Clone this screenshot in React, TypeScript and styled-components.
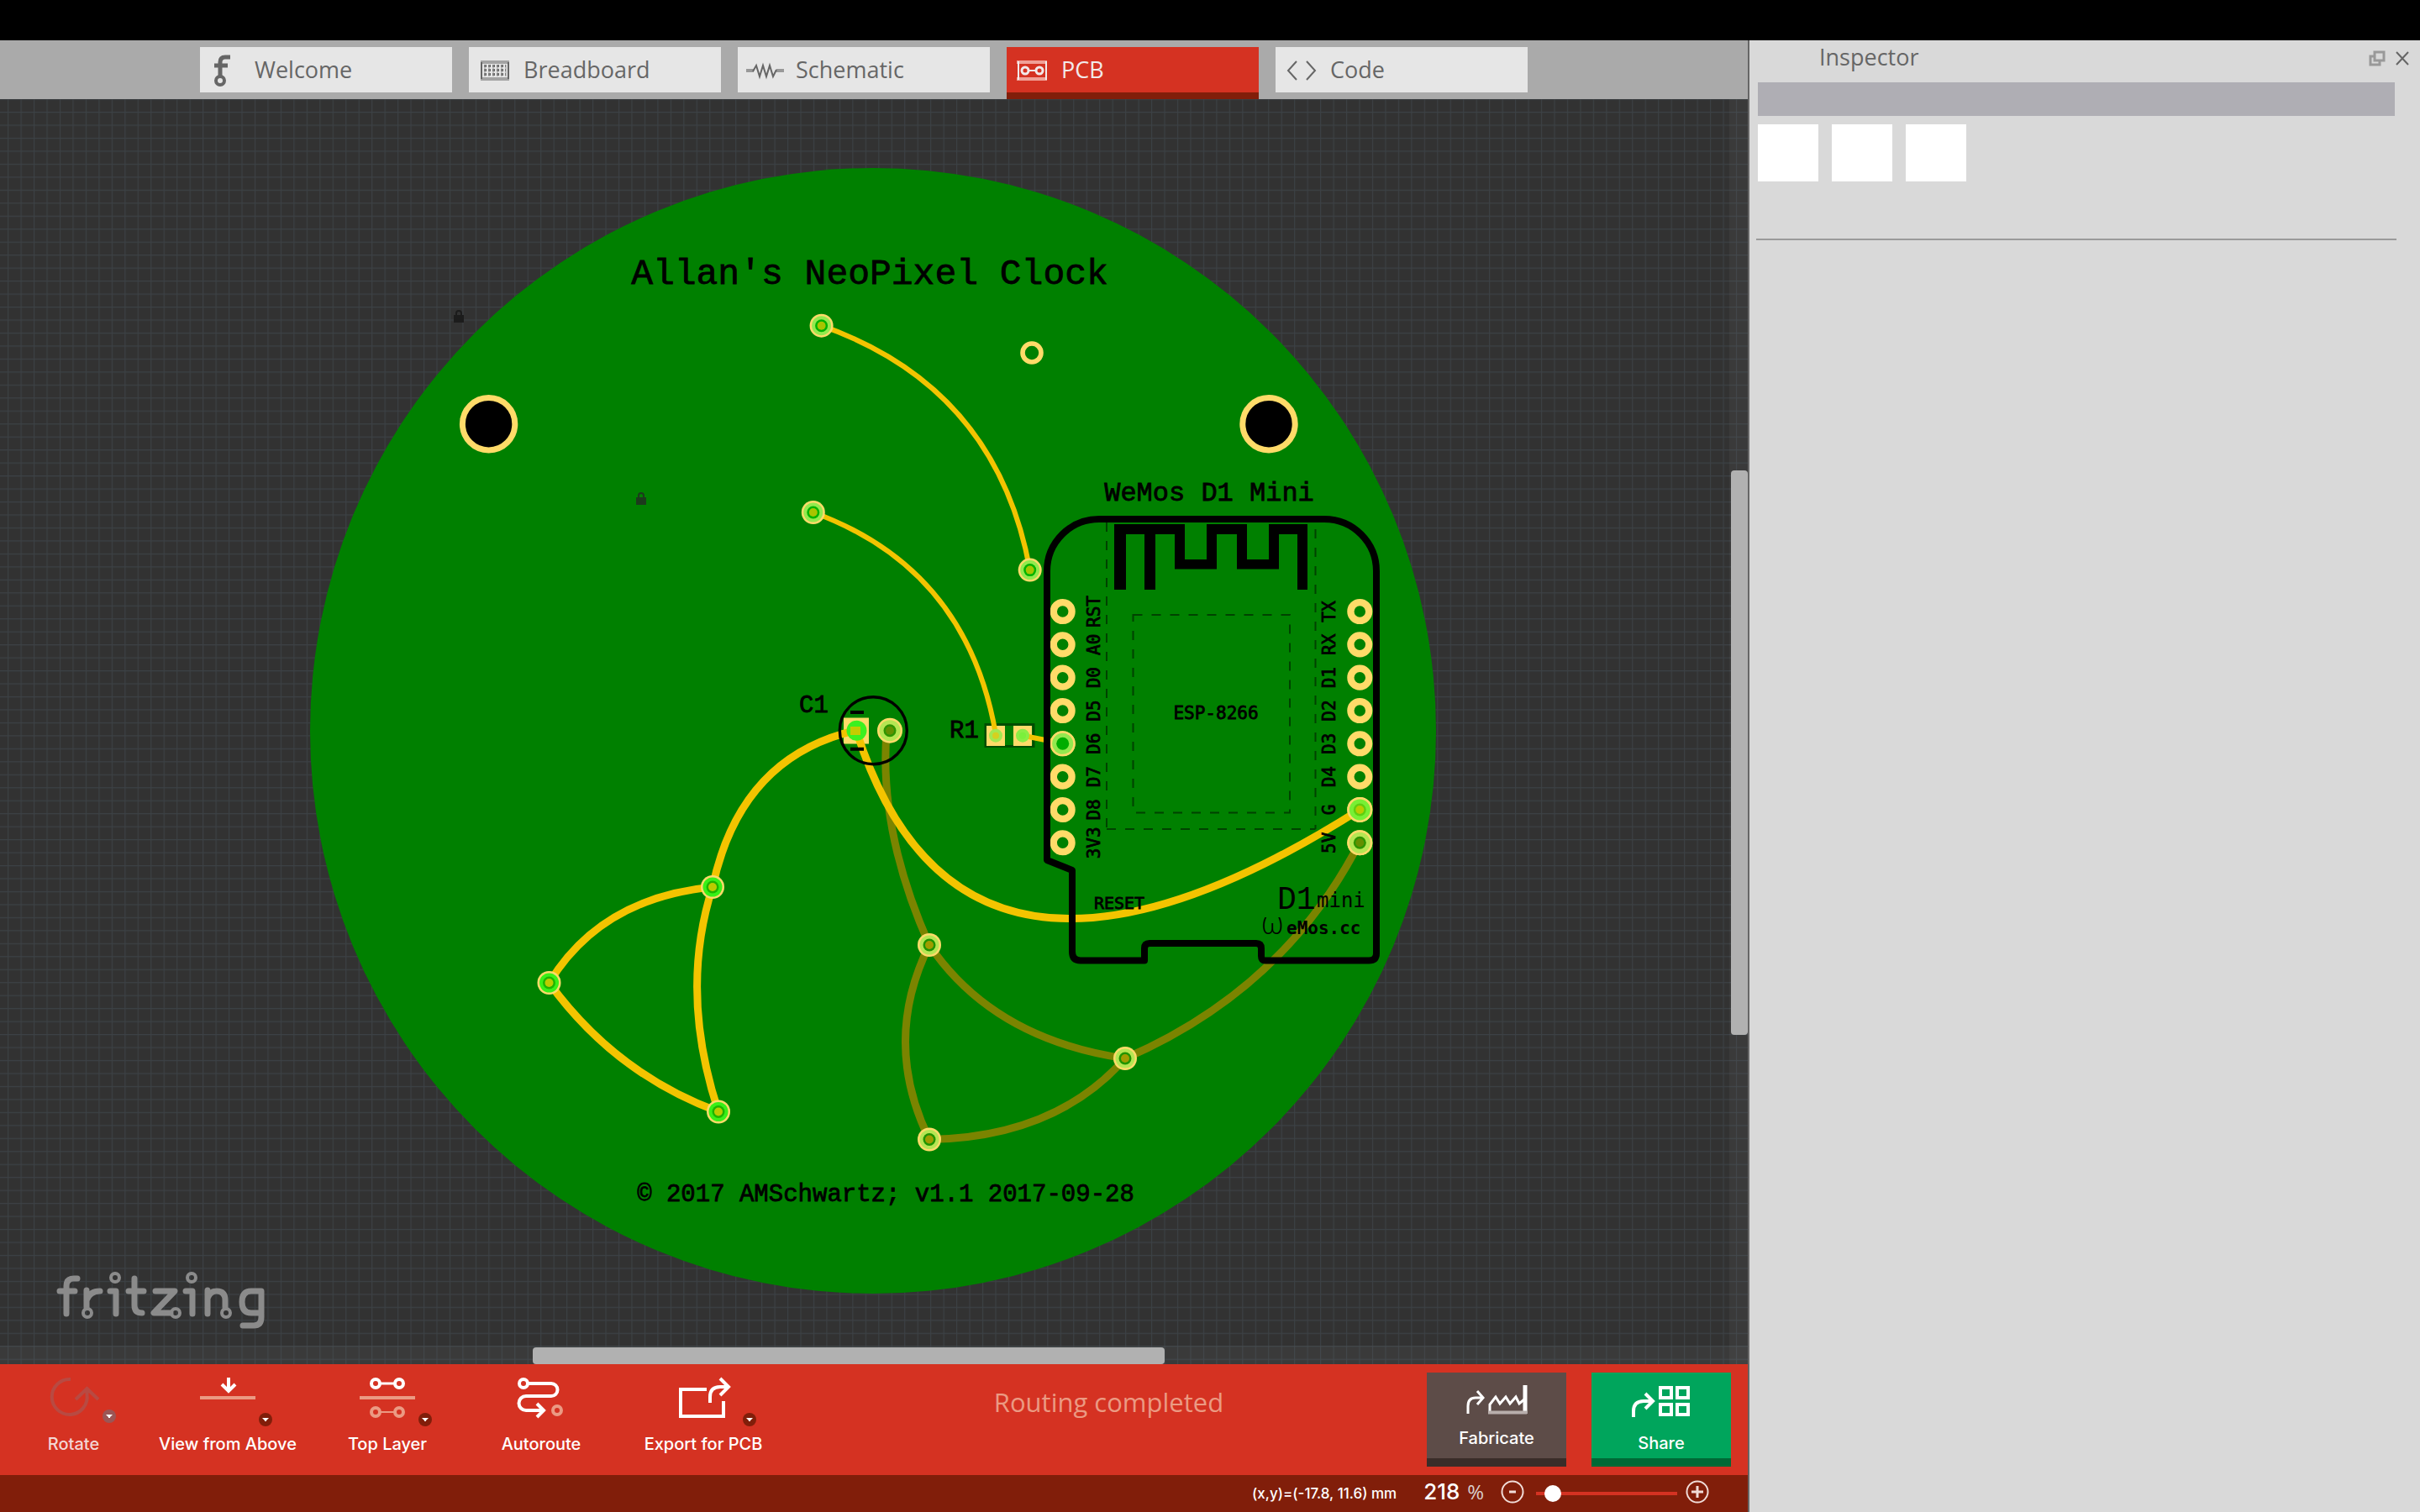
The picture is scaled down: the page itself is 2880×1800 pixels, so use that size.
import React from "react";
import styled, { createGlobalStyle, css } from "styled-components";

const uiFont = '"Open Sans", "Noto Sans", sans-serif';
const labelFont = 'Inter, Roboto, sans-serif';
const silkFont = '"Liberation Mono", monospace';
const pinFont = '"DejaVu Sans Mono", monospace';

const color = {
  red: "#d53222",
  darkRed: "#811e0a",
  blush: "#eb9a83",
  board: "#008000",
  copper: "#ffdb69",
  trace: "#f3c400",
  traceBelow: "#7b8400",
};

const GlobalStyle = createGlobalStyle`
  *, *::before, *::after { box-sizing: border-box; }
  body { margin: 0; background: #000; }
  button, input { font: inherit; color: inherit; }
`;

const Page = styled.div`
  display: flex;
  flex-direction: column;
  height: 100vh;
  font-family: ${uiFont};
`;

const MenuStrip = styled.div`
  flex: none;
  height: 48px;
  background: #000;
`;

const Workspace = styled.div`
  flex: 1;
  min-height: 0;
  display: flex;
`;

const Main = styled.main`
  flex: 1;
  min-width: 0;
  display: flex;
  flex-direction: column;
`;

const TabBar = styled.nav`
  flex: none;
  display: flex;
  gap: 20px;
  height: 70px;
  padding: 8px 20px 0 238px;
  background: #aaaaaa;
`;

const TabButton = styled.button<{ $active?: boolean }>`
  display: flex;
  align-items: flex-start;
  width: 300px;
  height: 54px;
  padding: 0;
  border: 0;
  background: #e6e6e6;
  color: #666666;
  font-size: 27px;
  font-weight: 450;
  line-height: 54px;
  text-align: left;
  ${(p) =>
    p.$active &&
    css`
      height: 62px;
      background: ${color.red};
      border-bottom: 8px solid ${color.darkRed};
      color: #f2e9ea;
    `}
`;

const TabIcon = styled.svg`
  flex: none;
  height: 54px;
  fill: none;
  stroke: currentColor;
`;

const Canvas = styled.section`
  position: relative;
  flex: 1;
  min-height: 0;
  overflow: hidden;
  background: #323232;
`;

const BoardDrawing = styled.svg`
  position: absolute;
  inset: 0;
  width: 100%;
  height: 100%;
`;

const Logo = styled.svg`
  position: absolute;
  left: 60px;
  bottom: 34px;
  width: 270px;
  height: 80px;
  fill: none;
  stroke: #8b8b8b;
  stroke-width: 7;
  stroke-linecap: round;
  stroke-linejoin: round;
`;

const Gutter = styled.div<{ $vertical?: boolean }>`
  position: absolute;
  right: 0;
  bottom: 0;
  display: flex;
  background: rgba(255, 255, 255, 0.04);
  ${(p) =>
    p.$vertical
      ? css`
          top: 0;
          width: 22px;
          flex-direction: column;
          padding-left: 2px;
        `
      : css`
          left: 0;
          height: 22px;
          padding-top: 2px;
        `}
`;

const Span = styled.div<{ $grow: number; $thumb?: boolean }>`
  flex: ${(p) => p.$grow} 1 0;
  border-radius: 4px;
  background: ${(p) => (p.$thumb ? "#b1b1b1" : "transparent")};
`;

const Toolbar = styled.div`
  flex: none;
  display: flex;
  align-items: flex-start;
  height: 132px;
  padding-right: 20px;
  background: ${color.red};
  color: #fff;
`;

const Tool = styled.button<{ $width: number; $muted?: boolean }>`
  flex: none;
  display: flex;
  flex-direction: column;
  align-items: center;
  gap: 7px;
  width: ${(p) => p.$width}px;
  padding: 12px 0 0;
  border: 0;
  background: none;
  color: ${(p) => (p.$muted ? "#f3d6d4" : "#fff")};
  font: 500 20px/24px ${labelFont};
  white-space: nowrap;
`;

const ToolIcon = styled.svg`
  width: 128px;
  height: 64px;
  fill: none;
  stroke: #fff;
  stroke-width: 4;
`;

const Message = styled.p`
  flex: 1;
  margin: 0;
  padding-top: 22px;
  color: ${color.blush};
  font-size: 31px;
  font-weight: 450;
  line-height: 46px;
  text-align: center;
`;

const Actions = styled.div`
  display: flex;
  gap: 30px;
  padding-top: 10px;
`;

const ActionButton = styled.button<{ $bg: string; $edge: string; $drop?: boolean }>`
  display: flex;
  flex-direction: column;
  align-items: center;
  gap: ${(p) => (p.$drop ? 6 : 0)}px;
  width: 166px;
  height: 112px;
  padding: 8px 0 0;
  border: 0;
  border-bottom: 10px solid ${(p) => p.$edge};
  background: ${(p) => p.$bg};
  color: #fff;
  font: 500 20px/24px ${labelFont};
`;

const ActionIcon = styled.svg`
  flex: none;
  width: 100px;
  height: 58px;
  fill: none;
  stroke: #fff;
  stroke-width: 4;
`;

const StatusBar = styled.footer`
  flex: none;
  display: flex;
  align-items: center;
  justify-content: flex-end;
  height: 44px;
  padding: 0 46px 4px 0;
  background: ${color.darkRed};
  color: #fff;
`;

const Coordinates = styled.output`
  margin-right: 32px;
  padding-top: 3px;
  font: 500 17px/24px ${labelFont};
`;

const ZoomField = styled.label`
  display: flex;
  align-items: center;
  margin-right: 20px;
  color: #d8cdcb;
  font-size: 24px;
  font-weight: 450;
  line-height: 32px;
`;

const ZoomInput = styled.input`
  width: 52px;
  padding: 0;
  border: 0;
  background: none;
  color: #fff;
  font: 500 26px/32px ${labelFont};
`;

const RoundButton = styled.button`
  display: flex;
  padding: 0;
  border: 0;
  background: none;

  svg {
    width: 28px;
    height: 28px;
    fill: none;
    stroke: #f0dcd8;
    stroke-width: 2;
  }
`;

const ZoomSlider = styled.input`
  appearance: none;
  width: 168px;
  height: 20px;
  margin: 4px 10px 0 14px;
  background: linear-gradient(${color.red}, ${color.red}) center / 100% 4px no-repeat;

  &::-webkit-slider-thumb {
    appearance: none;
    width: 20px;
    height: 20px;
    border-radius: 50%;
    background: #fff;
  }
`;

const Inspector = styled.aside`
  flex: none;
  width: 800px;
  border-left: 2px solid #666666;
  background: #d9d9d9;
  color: #666666;
`;

const InspectorHeader = styled.header`
  display: flex;
  align-items: center;
  height: 50px;
  padding: 0 10px 10px 83px;
`;

const InspectorTitle = styled.h2`
  flex: 1;
  margin: 0;
  font-size: 27px;
  font-weight: 450;
  line-height: 40px;
`;

const PanelButton = styled.button`
  display: flex;
  padding: 4px 0 0;
  margin-left: 8px;
  border: 0;
  background: none;

  svg {
    width: 22px;
    height: 22px;
    fill: none;
    stroke: currentColor;
    stroke-width: 2;
  }
`;

const InspectorBody = styled.div`
  margin: 0 28px 0 8px;
  height: 188px;
  border-bottom: 2px solid #9a9a9a;
`;

const NameBar = styled.div`
  height: 40px;
  margin: 0 2px 10px;
  background: #afaeb4;
`;

const Previews = styled.div`
  display: flex;
  gap: 16px;
  padding-left: 2px;
`;

const Preview = styled.div`
  width: 72px;
  height: 68px;
  background: #fff;
`;

const SilkText = styled.text<{ $size: number; $pin?: boolean; $bold?: boolean; $thin?: boolean }>`
  font-family: ${(p) => (p.$pin ? pinFont : silkFont)};
  font-size: ${(p) => p.$size}px;
  font-weight: ${(p) => (p.$bold ? 700 : 400)};
  fill: #000;
  stroke: #000;
  stroke-width: ${(p) => (p.$thin || p.$bold ? 0 : 0.8)};
  white-space: pre;
`;

const Mark = styled.text`
  font-family: ${uiFont};
  font-size: 36px;
  font-weight: 300;
  fill: #000;
`;

type Point = [number, number];

const leftPins = ["RST", "A0", "D0", "D5", "D6", "D7", "D8", "3V3"];
const rightPins = ["TX", "RX", "D1", "D2", "D3", "D4", "G", "5V"];
const pinY = (i: number) => 728 + i * 39.33;

const thinTraces = [
  "M977.6 387.7Q1186 461 1225.7 678.6",
  "M967.8 610Q1151 677 1185 874",
  "M1224 877L1264 885",
];
const wideTraces = [
  "M1019 869.5Q881 901 848 1056",
  "M848 1056Q715 1069 653.5 1170",
  "M653.5 1170Q732 1278 855 1323.5",
  "M848 1056Q808 1181 855 1323.5",
  "M1019 869.5Q1144 1264 1618 964",
];
const lowerTraces = [
  "M1055 873Q1046 990 1106 1125",
  "M1106 1125Q1182 1237 1339 1260",
  "M1339 1260Q1528 1178 1618 1003",
  "M1106 1125Q1049 1240 1106 1356.5",
  "M1106 1356.5Q1256 1354 1339 1260",
];

const thinVias: Point[] = [[977.6, 387.7], [967.8, 610], [1225.7, 678.6]];
const wideVias: Point[] = [[848, 1056], [653.5, 1170], [855, 1323.5]];
const lowerVias: Point[] = [[1106, 1125], [1339, 1260], [1106, 1356.5]];

function Via({ at, r = 14, glow, hole, core }: { at: Point; r?: number; glow: string; hole: string; core?: string }) {
  const [x, y] = at;
  return (
    <g>
      <circle cx={x} cy={y} r={r} fill={color.copper} />
      <circle cx={x} cy={y} r={r - 2.5} fill={glow} />
      <circle cx={x} cy={y} r={7.5} fill={hole} />
      {core && <circle cx={x} cy={y} r={5} fill={core} />}
    </g>
  );
}

function Lock({ x, y, fill }: { x: number; y: number; fill: string }) {
  return (
    <g>
      <path d={`M${x + 3} ${y + 6}V${y + 4}a3 3 0 0 1 6 0v2`} fill="none" stroke={fill} strokeWidth="2" />
      <rect x={x} y={y + 6} width="12" height="9" fill={fill} />
    </g>
  );
}

function Board() {
  return (
    <BoardDrawing viewBox="0 118 2080 1506" preserveAspectRatio="xMidYMid slice" role="img" aria-label="PCB layout">
      <defs>
        <pattern id="grid" x="40" y="133" width="15.465" height="15.465" patternUnits="userSpaceOnUse">
          <path d="M0.6 0V15.465M0 0.6H15.465" stroke="#3c4145" strokeWidth="1.1" />
        </pattern>
      </defs>
      <rect x="0" y="118" width="2080" height="1506" fill="url(#grid)" />
      <circle cx="1039" cy="870" r="670" fill={color.board} />

      <g fill="none" stroke={color.traceBelow} strokeWidth="9">
        {lowerTraces.map((d) => <path key={d} d={d} />)}
      </g>

      <g fill="none" stroke={color.copper} strokeWidth="8.3">
        {leftPins.map((p, i) => <circle key={p} cx="1264.7" cy={pinY(i)} r="10.9" />)}
        {rightPins.map((p, i) => <circle key={p} cx="1618.3" cy={pinY(i)} r="10.9" />)}
        <circle cx="1228" cy="420" r="11" strokeWidth="5.6" />
      </g>
      {[581.6, 1510].map((x) => (
        <circle key={x} cx={x} cy="504.7" r="31.2" fill="#000" stroke={color.copper} strokeWidth="7" />
      ))}

      <rect x="1004" y="854.5" width="30" height="31" fill={color.copper} />
      <rect x="1173" y="862.5" width="57" height="26" fill="none" stroke="#004d00" strokeWidth="3" />
      <rect x="1174" y="864" width="22" height="24" fill={color.copper} />
      <rect x="1206" y="864" width="22" height="24" fill={color.copper} />

      <g fill="none" stroke={color.trace} strokeWidth="6">
        {thinTraces.map((d) => <path key={d} d={d} />)}
      </g>
      <g fill="none" stroke={color.trace} strokeWidth="9">
        {wideTraces.map((d) => <path key={d} d={d} />)}
      </g>

      {thinVias.map((at) => <Via key={at.join()} at={at} glow="#93ea4e" hole="#00b300" core="#a8c400" />)}
      {wideVias.map((at) => <Via key={at.join()} at={at} glow="#38f018" hole="#1fb400" core="#bccb00" />)}
      {lowerVias.map((at) => <Via key={at.join()} at={at} glow="#b5e653" hole="#219400" core="#a09c00" />)}
      <Via at={[1264.7, pinY(4)]} r={15} glow="#93e84f" hole="#00ad00" />
      <Via at={[1618.3, pinY(6)]} r={15} glow="#77f035" hole="#5fcf10" core="#bccb00" />
      <Via at={[1618.3, pinY(7)]} r={15} glow="#b5e653" hole="#2f9400" core="#658f00" />
      <Via at={[1059, 869.7]} r={15} glow="#b5e653" hole="#2f9400" core="#658f00" />
      <circle cx="1019.5" cy="869.7" r="12" fill="#3df01f" />
      <rect x="1012" y="865" width="12" height="10" fill="#c4cc00" />
      <circle cx="1185" cy="875.7" r="8" fill="#a3e850" />
      <circle cx="1185" cy="875.7" r="4" fill="#d6d020" />
      <circle cx="1217" cy="875.7" r="8" fill="#8aee45" />
      <circle cx="1217" cy="875.7" r="4" fill="#7bf03c" />

      <g fill="none" stroke="#000">
        <circle cx="1039.3" cy="869.7" r="40" strokeWidth="3.4" />
        <path d="M1012 848H1028M1012 891.7H1028" strokeWidth="4" />
        <path
          d="M1246 1024V680A62 62 0 0 1 1308 618H1576A62 62 0 0 1 1638 680V1135Q1638 1143.5 1629 1143.5H1506Q1501 1143.5 1501 1138V1129Q1501 1123 1495 1123H1368Q1362 1123 1362 1129V1143.5H1286Q1276 1143.5 1276 1133V1036Z"
          strokeWidth="8"
          strokeLinejoin="round"
        />
        <g strokeWidth="2" strokeDasharray="11 11" stroke="#003300" opacity=".8">
          <path d="M1317 622V987M1317 987H1565.500M1565.500 630V987" />
          <rect x="1348.500" y="732" width="186.500" height="235.500" />
        </g>
      </g>
      <path d="M1326 624H1410V666H1436V624H1484V666H1510V624H1556V702H1544V636H1522V677.5H1472V636H1448V677.5H1398V636H1375V702H1362V636H1340V702H1326Z" fill="#000" />

      <SilkText $size={43} x="1035" y="338" textAnchor="middle">Allan's NeoPixel Clock</SilkText>
      <SilkText $size={32} x="1439" y="596" textAnchor="middle">WeMos D1 Mini</SilkText>
      <SilkText $size={29} x="1054" y="1430" textAnchor="middle">© 2017 AMSchwartz; v1.1 2017-09-28</SilkText>
      <SilkText $size={29} x="951" y="848">C1</SilkText>
      <SilkText $size={29} x="1130" y="878">R1</SilkText>
      <SilkText $size={21} $pin x="1447" y="856" textAnchor="middle">ESP-8266</SilkText>
      <SilkText $size={20} $pin x="1332" y="1082" textAnchor="middle">RESET</SilkText>
      <SilkText $size={38} $thin x="1520" y="1082">D1</SilkText>
      <SilkText $size={24} $pin $thin x="1567" y="1080">mini</SilkText>
      <Mark x="1501" y="1112">ω</Mark>
      <SilkText $size={21} $pin $bold x="1531" y="1112">eMos.cc</SilkText>
      {leftPins.map((p, i) => (
        <SilkText key={p} $size={21} $pin textAnchor="middle" transform={`translate(1309 ${pinY(i)}) rotate(-90)`}>{p}</SilkText>
      ))}
      {rightPins.map((p, i) => (
        <SilkText key={p} $size={21} $pin textAnchor="middle" transform={`translate(1589 ${pinY(i)}) rotate(-90)`}>{p}</SilkText>
      ))}

      <Lock x={540} y={369} fill="#1c1c1c" />
      <Lock x={757} y={586} fill="#1c3a1c" />
    </BoardDrawing>
  );
}

function FritzingLogo() {
  return (
    <Logo viewBox="0 0 270 80" role="img" aria-label="fritzing">
      <path d="M19 54V21q0-9 9-9h4M11 27H29" />
      <path d="M43 26V46M43 38q4-11 16-11" />
      <path d="M71 27h7V54" />
      <path d="M100 12V44q0 9 9 9M93 27h18" />
      <path d="M125 27h23L123 53h20" />
      <path d="M161 27h8V54" />
      <path d="M187 26V54M187 36q3-9 11-9 10 0 10 11V46" />
      <path d="M251 27H239q-11 0-11 13t11 13h12M251 27V58q0 10-9 10H229" />
      <g strokeWidth="4">
        <circle cx="44" cy="53" r="5" />
        <circle cx="77" cy="11" r="5" />
        <circle cx="149" cy="53" r="5" />
        <circle cx="168" cy="11" r="5" />
        <circle cx="209" cy="53" r="5" />
      </g>
    </Logo>
  );
}

function MenuBadge({ x, y = 54, fill = color.darkRed }: { x: number; y?: number; fill?: string }) {
  return (
    <g stroke="none">
      <circle cx={x} cy={y} r="8" fill={fill} />
      <path d={`M${x - 4} ${y - 2}h8l-3 3v1h-2v-1z`} fill="#fff" />
    </g>
  );
}

const dotCols = [19, 24, 29, 34, 39, 44];

const tabs = [
  {
    name: "Welcome",
    slot: 65,
    icon: (
      <>
        <path d="M24 34V18q0-6 6-6h6M17 22h16" strokeWidth="5" />
        <circle cx="24" cy="40" r="5" strokeWidth="4" />
      </>
    ),
  },
  {
    name: "Breadboard",
    slot: 65,
    icon: (
      <>
        <path d="M14 18h34M14 38h34" stroke="#a3a3a3" strokeWidth="4" />
        <path d="M15 18v20M47 18v20" strokeWidth="2" />
        <path d="M18 22.500h26M18 27.500h26M18 32.500h26" strokeWidth="3" strokeDasharray="3 2" />
        {dotCols.map((x) => <path key={x} d={`M${x} 21v14`} stroke="#999" strokeWidth="1" />)}
      </>
    ),
  },
  {
    name: "Schematic",
    slot: 69,
    icon: (
      <>
        <path d="M10 28h9M46 28h9" stroke="#999" strokeWidth="4" />
        <path d="M18 29l4-7 4 13 4-13 4 13 4-13 4 13 4-8" strokeWidth="2" />
      </>
    ),
  },
  {
    name: "PCB",
    slot: 65,
    active: true,
    icon: (
      <>
        <path d="M12 18h36M12 38h36" stroke="#f0a097" strokeWidth="4" />
        <path d="M14 17v22M47 17v22M26 28h9" strokeWidth="2" />
        <circle cx="22" cy="28" r="4" strokeWidth="3" />
        <circle cx="39" cy="28" r="4" strokeWidth="3" />
      </>
    ),
  },
  {
    name: "Code",
    slot: 65,
    icon: <path d="M25 17l-10 11 10 11M37 17l10 11-10 11" strokeWidth="2" />,
  },
];

export default function App() {
  return (
    <Page>
      <GlobalStyle />
      <MenuStrip />
      <Workspace>
        <Main>
          <TabBar aria-label="Views">
            {tabs.map((t) => (
              <TabButton key={t.name} type="button" $active={t.active}>
                <TabIcon width={t.slot} viewBox={`0 0 ${t.slot} 54`} aria-hidden="true">{t.icon}</TabIcon>
                {t.name}
              </TabButton>
            ))}
          </TabBar>

          <Canvas>
            <Board />
            <FritzingLogo />
            <Gutter>
              <Span $grow={634} />
              <Span $grow={752} $thumb />
              <Span $grow={694} />
            </Gutter>
            <Gutter $vertical>
              <Span $grow={442} />
              <Span $grow={672} $thumb />
              <Span $grow={392} />
            </Gutter>
          </Canvas>

          <Toolbar>
            <Tool type="button" $width={175} $muted>
              <ToolIcon viewBox="-4 0 128 64" aria-hidden="true">
                <path d="M56 6A21 21 0 1 0 75.500 24V18M62 30L75.500 17 89 30" stroke="#b84a42" />
                <MenuBadge x={102} y={50} fill="#9b5656" />
              </ToolIcon>
              Rotate
            </Tool>
            <Tool type="button" $width={192}>
              <ToolIcon viewBox="-4 0 128 64" aria-hidden="true">
                <path d="M61 4V20M53 12l8 8 8-8" />
                <path d="M27 28H93" stroke={color.blush} />
                <MenuBadge x={105} />
              </ToolIcon>
              View from Above
            </Tool>
            <Tool type="button" $width={188}>
              <ToolIcon viewBox="-4 0 128 64" aria-hidden="true">
                <circle cx="46" cy="11" r="5" />
                <circle cx="74" cy="11" r="5" />
                <path d="M51 11H69" strokeWidth="3" />
                <path d="M27 28H93" stroke={color.blush} />
                <g stroke={color.blush}>
                  <circle cx="46" cy="45" r="5" />
                  <circle cx="74" cy="45" r="5" />
                  <path d="M51 45H69" strokeWidth="2" />
                </g>
                <MenuBadge x={105} />
              </ToolIcon>
              Top Layer
            </Tool>
            <Tool type="button" $width={178}>
              <ToolIcon viewBox="-4 0 128 64" aria-hidden="true">
                <circle cx="39" cy="11" r="5" />
                <path d="M44 11H72a7.500 7.500 0 0 1 0 15H42a8.500 8.500 0 0 0 0 17H62M55 35l8 8-8 8" />
                <circle cx="79" cy="43" r="5" stroke={color.blush} />
              </ToolIcon>
              Autoroute
            </Tool>
            <Tool type="button" $width={208}>
              <ToolIcon viewBox="-4 0 128 64" aria-hidden="true">
                <path d="M64 18H33V50H84V32" />
                <path d="M68 34V27Q68 15 80 15H89M80 5l10 10-10 10" />
                <MenuBadge x={115} />
              </ToolIcon>
              Export for PCB
            </Tool>
            <Message>Routing completed</Message>
            <Actions>
              <ActionButton type="button" $bg="#5d4c48" $edge="#3a2d29">
                <ActionIcon viewBox="33 8 100 58" aria-hidden="true">
                  <path d="M49 49V40Q49 30 58 30H66M60 22l7 8-7 8" strokeWidth="3" />
                  <path d="M75 48V38L82 29 87 37 94 29 99 37 106 29 110 37 116 32" strokeWidth="3" />
                  <path d="M117 15V49" strokeWidth="5" />
                  <path d="M73 47.500H119" stroke="#b8aeac" />
                </ActionIcon>
                Fabricate
              </ActionButton>
              <ActionButton type="button" $bg="#00a55c" $edge="#006936" $drop>
                <ActionIcon viewBox="33 8 100 58" aria-hidden="true">
                  <path d="M50 53V46Q50 34 62 34H71M64 25l9 9-9 9" />
                  <path d="M82 18h13v12H82zM102 18h13v12H102zM82 38h13v12H82zM102 38h13v12H102z" />
                </ActionIcon>
                Share
              </ActionButton>
            </Actions>
          </Toolbar>

          <StatusBar>
            <Coordinates>(x,y)=(-17.8, 11.6) mm</Coordinates>
            <ZoomField>
              <ZoomInput type="text" defaultValue="218" aria-label="Zoom" />%
            </ZoomField>
            <RoundButton type="button" aria-label="Zoom out">
              <svg viewBox="0 0 28 28"><circle cx="14" cy="14" r="12.500" /><path d="M10 14h8" strokeWidth="3" /></svg>
            </RoundButton>
            <ZoomSlider type="range" min={0} max={100} defaultValue={7} aria-label="Zoom level" />
            <RoundButton type="button" aria-label="Zoom in">
              <svg viewBox="0 0 28 28"><circle cx="14" cy="14" r="12.500" /><path d="M7 14h14M14 7v14" strokeWidth="3" /></svg>
            </RoundButton>
          </StatusBar>
        </Main>

        <Inspector>
          <InspectorHeader>
            <InspectorTitle>Inspector</InspectorTitle>
            <PanelButton type="button" aria-label="Float panel">
              <svg viewBox="0 0 22 22"><path d="M8 3h11v10H8zM8 8H3v10h11v-5" stroke="#999" strokeWidth="3" /></svg>
            </PanelButton>
            <PanelButton type="button" aria-label="Close panel">
              <svg viewBox="0 0 22 22"><path d="M4 3l14 15M18 3L4 18" /></svg>
            </PanelButton>
          </InspectorHeader>
          <InspectorBody>
            <NameBar />
            <Previews>
              <Preview />
              <Preview />
              <Preview />
            </Previews>
          </InspectorBody>
        </Inspector>
      </Workspace>
    </Page>
  );
}
